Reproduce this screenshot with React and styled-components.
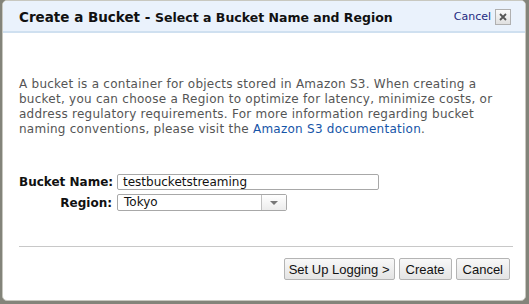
import React from "react";
import styled, { createGlobalStyle } from "styled-components";

const Global = createGlobalStyle`
  html, body { margin: 0; padding: 0; }
  body { background: #83847a; width: 529px; height: 304px; overflow: hidden; }
`;

const Frame = styled.div`
  width: 529px;
  height: 304px;
  box-sizing: border-box;
  padding: 0 3px 3px 2px;
  background: #83847a;
`;

const Dialog = styled.div`
  height: 100%;
  box-sizing: border-box;
  background: #fff;
  border: 1px solid #c8c8c0;
  border-radius: 5px;
  overflow: hidden;
  display: flex;
  flex-direction: column;
  font-family: "DejaVu Sans", Verdana, sans-serif;
`;

const Header = styled.div`
  height: 32px;
  box-sizing: border-box;
  background: #eaf2fc;
  border-bottom: 2px solid #cfe0f0;
  display: flex;
  align-items: center;
  padding: 1px 14px 0 16px;
`;

const Title = styled.div`
  font-weight: bold;
  font-size: 13.5px;
  color: #111;
  flex: 1;
  white-space: nowrap;
`;

const Sub = styled.span`
  font-size: 12.5px;
`;

const CancelLink = styled.a`
  font-size: 11px;
  color: #1d2a80;
  margin-right: 4px;
  text-decoration: none;
`;

const CloseBox = styled.div`
  width: 14px;
  height: 14px;
  border: 1px solid #b0b0b0;
  background: linear-gradient(#fafafa, #e0e0e0);
  display: flex;
  align-items: center;
  justify-content: center;
`;

const Body = styled.div`
  flex: 1;
  display: flex;
  flex-direction: column;
  padding: 44px 14px 0 16px;
`;

const Para = styled.p`
  margin: 0;
  font-size: 12px;
  line-height: 15px;
  letter-spacing: 0.25px;
  color: #555;
  width: 490px;
`;

const Link = styled.a`
  color: #1655a8;
  text-decoration: none;
`;

const Form = styled.div`
  margin-top: 37px;
  display: grid;
  grid-template-columns: 93px auto;
  column-gap: 5px;
  row-gap: 4px;
  align-items: center;
`;

const Label = styled.label`
  font-weight: bold;
  font-size: 12px;
  color: #111;
  text-align: right;
  white-space: nowrap;
`;

const Input = styled.div`
  width: 262px;
  height: 16px;
  box-sizing: border-box;
  border: 1px solid #a8a8a8;
  border-radius: 2px;
  font-size: 12px;
  line-height: 14px;
  padding-left: 5px;
  color: #111;
`;

const Select = styled.div`
  width: 170px;
  height: 17px;
  box-sizing: border-box;
  border: 1px solid #a8a8a8;
  border-radius: 2px;
  display: flex;
  font-size: 12px;
  color: #111;
`;

const SelectValue = styled.div`
  flex: 1;
  padding-left: 6px;
  line-height: 15px;
`;

const Arrow = styled.div`
  width: 24px;
  border-left: 1px solid #c0c0c0;
  background: linear-gradient(#fff, #ececec);
  display: flex;
  align-items: center;
  justify-content: center;
`;

const Divider = styled.div`
  margin-top: 35px;
  height: 1px;
  background: #c8c8c8;
  width: 494px;
`;

const Buttons = styled.div`
  display: flex;
  justify-content: flex-end;
  gap: 4px;
  margin-top: 11px;
  padding-right: 1px;
`;

const Button = styled.button`
  font-family: "Liberation Sans", Arial, sans-serif;
  font-size: 13px;
  color: #111;
  height: 22px;
  padding: 0 ${(p) => p.$pad ?? 6}px;
  border: 1px solid #b4b4b4;
  border-radius: 2px;
  background: linear-gradient(#f8f8f8, #e4e4e4);
`;

export default function App() {
  return (
    <>
      <Global />
      <Frame>
        <Dialog>
          <Header>
            <Title>
              Create a Bucket - <Sub>Select a Bucket Name and Region</Sub>
            </Title>
            <CancelLink href="#">Cancel</CancelLink>
            <CloseBox>
              <svg width="8" height="8" viewBox="0 0 8 8">
                <path d="M1 1L7 7M7 1L1 7" stroke="#555" strokeWidth="1.8" />
              </svg>
            </CloseBox>
          </Header>
          <Body>
            <Para>
              A bucket is a container for objects stored in Amazon S3. When creating a
              bucket, you can choose a Region to optimize for latency, minimize costs, or
              address regulatory requirements. For more information regarding bucket
              naming conventions, please visit the <Link href="#">Amazon S3 documentation</Link>.
            </Para>
            <Form>
              <Label>Bucket Name:</Label>
              <Input>testbucketstreaming</Input>
              <Label>Region:</Label>
              <Select>
                <SelectValue>Tokyo</SelectValue>
                <Arrow>
                  <svg width="8" height="4" viewBox="0 0 8 4">
                    <path d="M0 0H8L4 4Z" fill="#777" />
                  </svg>
                </Arrow>
              </Select>
            </Form>
            <Divider />
            <Buttons>
              <Button $pad={4}>Set Up Logging &gt;</Button>
              <Button>Create</Button>
              <Button>Cancel</Button>
            </Buttons>
          </Body>
        </Dialog>
      </Frame>
    </>
  );
}
